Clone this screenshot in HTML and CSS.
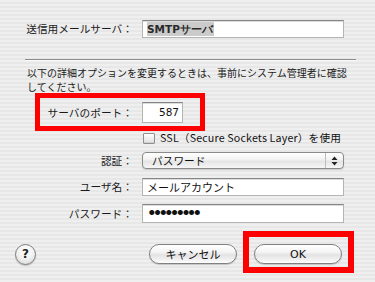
FILE: index.html
```html
<!DOCTYPE html>
<html lang="ja">
<head>
<meta charset="utf-8">
<link rel="stylesheet" href="styles.css">
</head>
<body>
<div class="sheet">
  <div class="row row-smtp">
    <label class="lbl">送信用メールサーバ：</label>
    <div class="field field-wide"><span class="sel">SMTPサーバ</span></div>
  </div>
  <div class="sep"></div>
  <p class="note">以下の詳細オプションを変更するときは、事前にシステム管理者に確認してください。</p>
  <div class="row row-port">
    <label class="lbl">サーバのポート：</label>
    <div class="field field-port">587</div>
  </div>
  <div class="row row-ssl">
    <span class="lbl"></span>
    <span class="check"></span>
    <span class="ssl-text">SSL（Secure Sockets Layer）を使用</span>
  </div>
  <div class="row row-auth">
    <label class="lbl">認証：</label>
    <div class="popup">
      <span class="popup-text">パスワード</span>
      <span class="stepper">
        <svg width="7" height="10" viewBox="0 0 7 10"><path d="M3.5 0.5 L6.5 4 L0.5 4 Z M0.5 6 L6.5 6 L3.5 9.5 Z" fill="#222"/></svg>
      </span>
    </div>
  </div>
  <div class="row row-user">
    <label class="lbl">ユーザ名：</label>
    <div class="field field-wide">メールアカウント</div>
  </div>
  <div class="row row-pass">
    <label class="lbl">パスワード：</label>
    <div class="field field-wide dots">●●●●●●●●●</div>
  </div>
  <div class="buttons">
    <span class="help">?</span>
    <span class="btn btn-cancel">キャンセル</span>
    <span class="btn btn-ok">OK</span>
  </div>
  <div class="mark mark-port"></div>
  <div class="mark mark-ok"></div>
</div>
</body>
</html>
```

FILE: styles.css
```css
* { box-sizing: border-box; }
html, body { margin: 0; padding: 0; }
body {
  font-family: "Noto Sans CJK JP", "DejaVu Sans", sans-serif;
  color: #111;
}
.sheet {
  position: relative;
  width: 375px;
  height: 282px;
  overflow: hidden;
  padding-top: 20px;
  background: repeating-linear-gradient(180deg, #efefef 0 2px, #e7e7e7 2px 4px);
}
.row {
  display: flex;
  align-items: center;
}
.lbl {
  width: 142px;
  flex: none;
  padding-right: 9px;
  text-align: right;
  font-size: 10.7px;
  line-height: 14px;
  white-space: nowrap;
  color: #1a1a1a;
}
.field {
  height: 18px;
  background: #fff;
  border: 1px solid #b4b4b4;
  border-top-color: #858585;
  box-shadow: inset 0 1px 0 #dcdcdc;
  font-size: 11px;
  line-height: 16px;
  padding: 0 4px;
  white-space: nowrap;
}
.field-wide { width: 202px; }
.sel {
  background: #cbcbcb;
  font-family: "DejaVu Sans", sans-serif;
  font-weight: 600;
  font-size: 10.5px;
  padding: 1px 1px 1px 0;
  color: #2a2a2a;
}
.row-smtp .field { font-size: 10.5px; }
.sep {
  margin: 21px 19px 0 25px;
  height: 1px;
  background: #8c8c8c;
  box-shadow: 0 1px 0 #fafafa;
}
.note {
  margin: 6px 20px 0 27px;
  font-size: 10px;
  line-height: 13.5px;
  color: #1a1a1a;
  height: 28px;
}
.row-port { margin-top: 8px; }
.field-port {
  width: 41px;
  height: 21px;
  line-height: 19px;
  text-align: right;
  padding-right: 3px;
  font-family: "DejaVu Sans", sans-serif;
  font-size: 10.5px;
}
.row-ssl { margin-top: 9px; height: 12px; }
.row-ssl .lbl { width: 143px; }
.check {
  width: 12px;
  height: 11px;
  flex: none;
  border: 1px solid #8f8f8f;
  border-radius: 1px;
  background: linear-gradient(#fdfdfd, #e2e2e2);
  box-shadow: inset 0 -1px 1px #cfcfcf;
}
.ssl-text {
  margin-left: 5px;
  font-size: 10.7px;
  line-height: 12px;
  letter-spacing: 0.15px;
  white-space: nowrap;
  color: #111;
}
.row-auth { margin-top: 8px; }
.popup {
  width: 202px;
  height: 17px;
  display: flex;
  align-items: center;
  border: 1px solid #8a8a8a;
  border-radius: 4px;
  background: linear-gradient(#ffffff 0%, #f2f2f2 45%, #e4e4e4 55%, #f6f6f6 100%);
  box-shadow: 0 1px 1px rgba(0,0,0,0.15);
}
.popup-text {
  flex: 1;
  padding-left: 9px;
  font-size: 10.7px;
  line-height: 15px;
  color: #111;
}
.stepper {
  width: 18px;
  height: 100%;
  display: flex;
  align-items: center;
  justify-content: center;
  border-left: 1px solid #bdbdbd;
}
.row-user { margin-top: 9px; }
.row-pass { margin-top: 8px; }
.row-pass .field { height: 19px; }
.row-user .field { color: #111; }
.dots {
  font-size: 5.6px;
  letter-spacing: 0.1px;
  line-height: 17px;
  padding-left: 6px;
  color: #111;
}
.buttons {
  display: flex;
  align-items: center;
  margin-top: 21px;
  padding-left: 15px;
  height: 20px;
}
.help {
  width: 21px;
  height: 21px;
  border-radius: 50%;
  border: 1px solid #7c7c7c;
  background: radial-gradient(circle at 50% 30%, #ffffff 0%, #f1f1f1 50%, #d4d4d4 100%);
  box-shadow: 0 1px 1px rgba(0,0,0,0.2);
  display: flex;
  align-items: center;
  justify-content: center;
  font-family: "DejaVu Sans", sans-serif;
  font-weight: bold;
  font-size: 12px;
  color: #222;
}
.btn {
  height: 20px;
  border: 1px solid #808080;
  border-radius: 10px;
  background: linear-gradient(#ffffff 0%, #f4f4f4 40%, #e3e3e3 55%, #f3f3f3 85%, #ffffff 100%);
  box-shadow: 0 1px 1px rgba(0,0,0,0.18);
  display: flex;
  align-items: center;
  justify-content: center;
  font-size: 11px;
  color: #111;
}
.btn-cancel { width: 88px; margin-left: 113px; }
.btn-ok { width: 88px; margin-left: 17px; font-family: "DejaVu Sans", sans-serif; font-size: 11px; }
.mark {
  position: absolute;
  border: 5px solid #ff0000;
}
.mark-port { left: 35px; top: 93px; width: 170px; height: 38px; }
.mark-ok { left: 243px; top: 231px; width: 111px; height: 42px; border-width: 6px; }
```
